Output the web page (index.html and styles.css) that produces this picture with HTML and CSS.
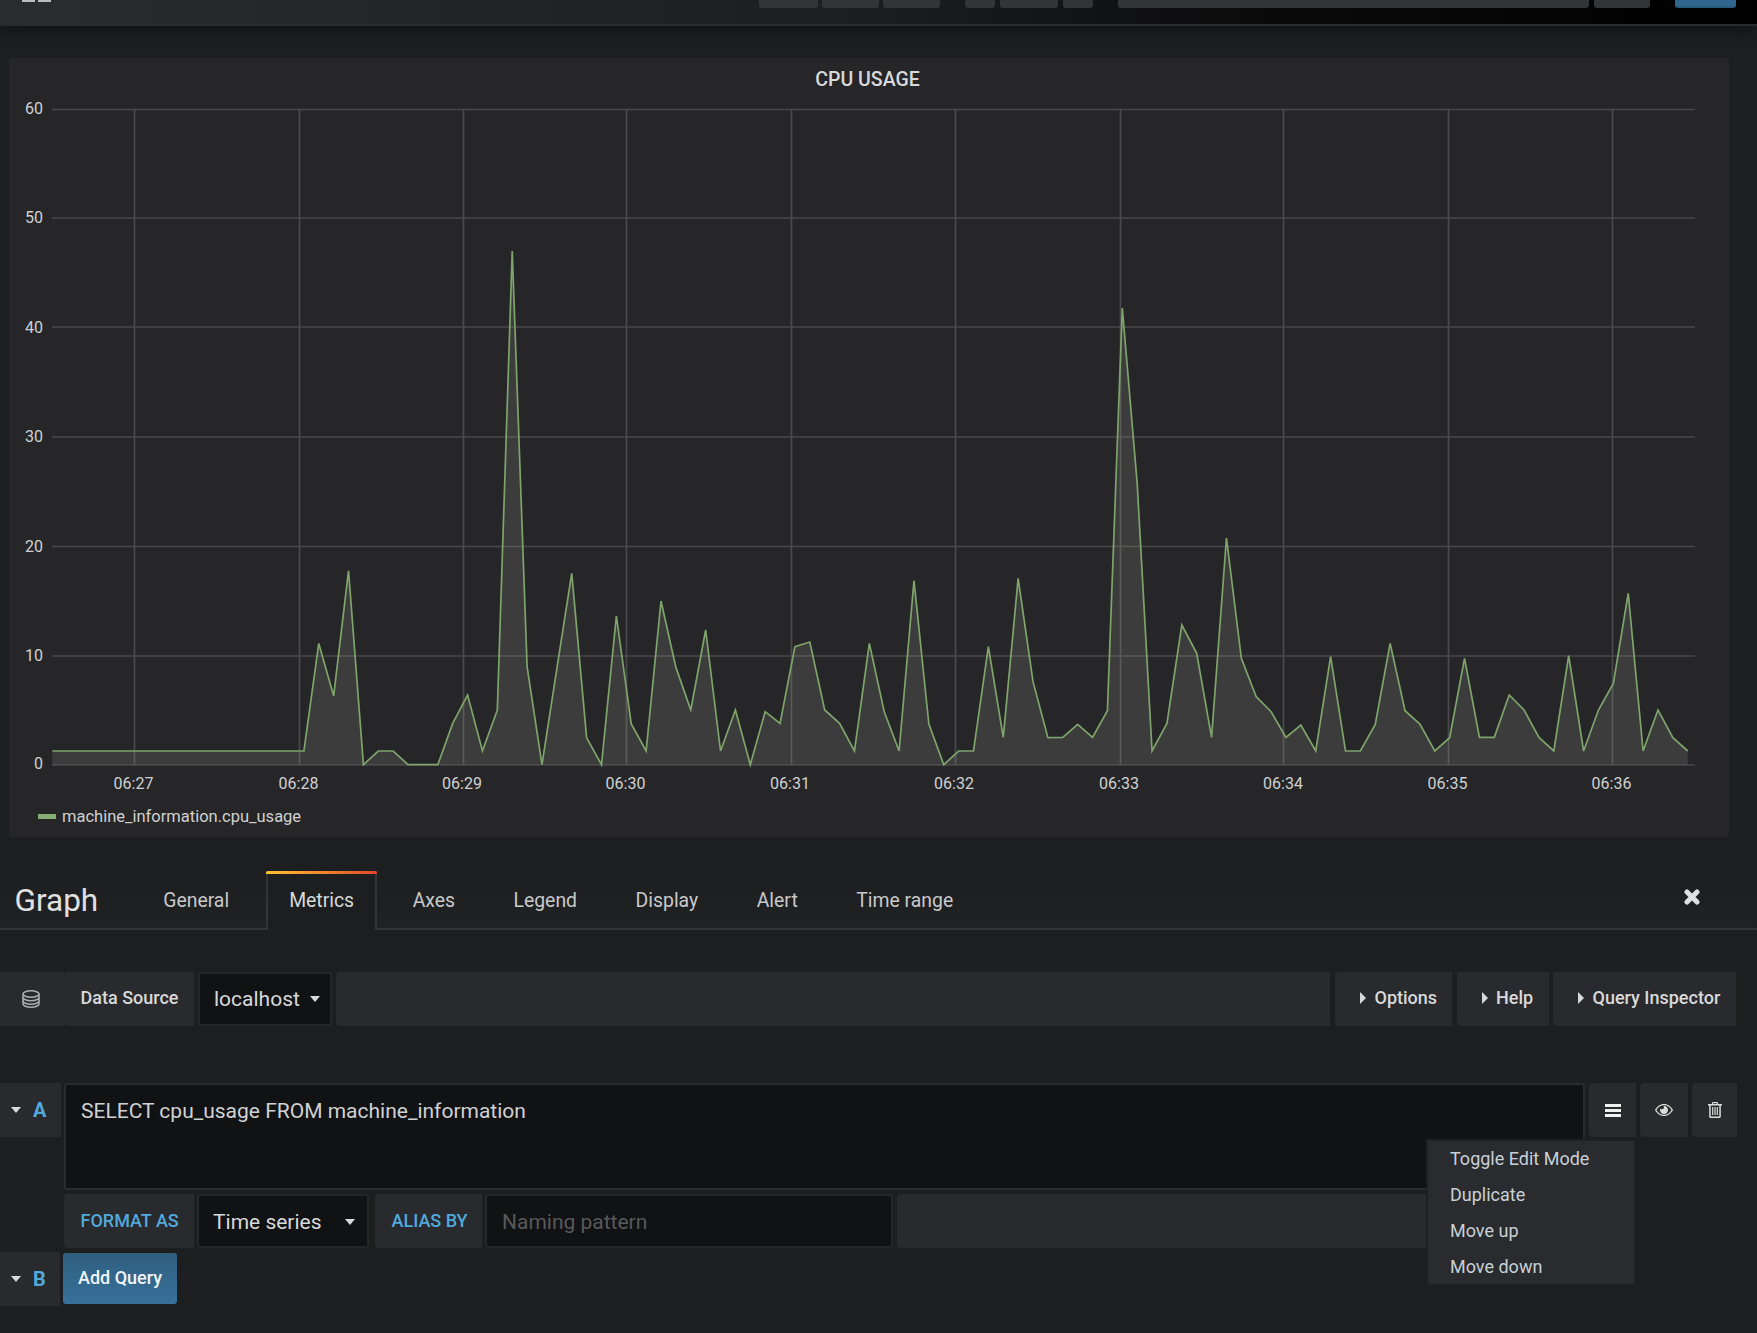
FILE: index.html
```html
<!DOCTYPE html>
<html lang="en">
<head>
<meta charset="utf-8">
<title>CPU USAGE - Graph</title>
<link rel="stylesheet" href="styles.css">
</head>
<body>
<header class="topbar">
  <div class="logo"><span></span><span></span></div>
  <div class="navgroup g1"><span class="nb w59"></span><span class="nb w57"></span><span class="nb w57"></span></div>
  <div class="navgroup g2"><span class="nb w30"></span><span class="nb w58"></span><span class="nb w30"></span></div>
  <div class="navgroup g3"><span class="nb w471"></span><span class="nb w56"></span></div>
  <div class="navgroup g4"><span class="nb nb-blue w61"></span></div>
</header>

<section class="panel">
  <h2 class="panel-title">CPU USAGE</h2>
  <svg class="chart" viewBox="9 100 1720 695" width="1720" height="695">
    <g class="grid">
      <path d="M52 109.5H1695M52 218H1695M52 327H1695M52 437H1695M52 546.5H1695M52 656H1695M52 765H1695"/>
      <path class="vgrid" d="M134.5 109V765M299.5 109V765M463.5 109V765M626.5 109V765M791.5 109V765M955.5 109V765M1120.5 109V765M1283.5 109V765M1448.5 109V765M1612.5 109V765"/>
    </g>
    <g transform="translate(303.9 764.7) scale(14.88 -1)">
      <polygon class="area" points="-16.9,0 -16.9,13.7 0,13.7 1,121.3 2,68.7 3,194 4,0 5,13.7 6,13.7 7,0 8,0 9,0 10,41.3 11,69.7 12,13.7 13,54.7 14,513.6 15,98 16,0 17,96 18,191.3 19,27 20,0 21,148.7 22,40.7 23,13.7 24,163.7 25,97.3 26,54.7 27,134.7 28,13.7 29,54.7 30,0 31,53 32,41.3 33,118 34,122.7 35,54.7 36,41.3 37,13.7 38,121.3 39,53 40,13.7 41,184 42,40.7 43,0 44,13.7 45,13.7 46,118 47,27.3 48,186.3 49,83 50,27 51,27.3 52,40.3 53,27.3 54,54 55,456.7 56,281.3 57,13.7 58,41.3 59,139.7 60,111.3 61,27.3 62,226.7 63,106.3 64,68 65,53 66,27.3 67,39.7 68,13.7 69,108 70,13.7 71,13.7 72,40.3 73,121.3 74,54 75,40.7 76,13.7 77,27 78,106.3 79,27.3 80,27.3 81,69.7 82,54.7 83,27.3 84,13.7 85,109 86,13.7 87,54.7 88,81.3 89,171.3 90,13.7 91,54.7 92,27 93,13.7 93,0"/>
      <polyline class="line" points="-16.9,13.7 0,13.7 1,121.3 2,68.7 3,194 4,0 5,13.7 6,13.7 7,0 8,0 9,0 10,41.3 11,69.7 12,13.7 13,54.7 14,513.6 15,98 16,0 17,96 18,191.3 19,27 20,0 21,148.7 22,40.7 23,13.7 24,163.7 25,97.3 26,54.7 27,134.7 28,13.7 29,54.7 30,0 31,53 32,41.3 33,118 34,122.7 35,54.7 36,41.3 37,13.7 38,121.3 39,53 40,13.7 41,184 42,40.7 43,0 44,13.7 45,13.7 46,118 47,27.3 48,186.3 49,83 50,27 51,27.3 52,40.3 53,27.3 54,54 55,456.7 56,281.3 57,13.7 58,41.3 59,139.7 60,111.3 61,27.3 62,226.7 63,106.3 64,68 65,53 66,27.3 67,39.7 68,13.7 69,108 70,13.7 71,13.7 72,40.3 73,121.3 74,54 75,40.7 76,13.7 77,27 78,106.3 79,27.3 80,27.3 81,69.7 82,54.7 83,27.3 84,13.7 85,109 86,13.7 87,54.7 88,81.3 89,171.3 90,13.7 91,54.7 92,27 93,13.7"/>
    </g>
    <g class="ylabels">
      <text x="43" y="114">60</text>
      <text x="43" y="223">50</text>
      <text x="43" y="332.500">40</text>
      <text x="43" y="442">30</text>
      <text x="43" y="551.500">20</text>
      <text x="43" y="660.500">10</text>
      <text x="43" y="769">0</text>
    </g>
    <g class="xlabels">
      <text x="133.5" y="789">06:27</text>
      <text x="298.5" y="789">06:28</text>
      <text x="462" y="789">06:29</text>
      <text x="625.5" y="789">06:30</text>
      <text x="790" y="789">06:31</text>
      <text x="954" y="789">06:32</text>
      <text x="1119" y="789">06:33</text>
      <text x="1283" y="789">06:34</text>
      <text x="1447.5" y="789">06:35</text>
      <text x="1611.5" y="789">06:36</text>
    </g>
  </svg>
  <div class="legend"><span class="swatch"></span><span>machine_information.cpu_usage</span></div>
</section>

<nav class="tabs">
  <h1 class="tabs-title">Graph</h1>
  <a class="tab">General</a>
  <a class="tab tab-active">Metrics</a>
  <a class="tab">Axes</a>
  <a class="tab">Legend</a>
  <a class="tab">Display</a>
  <a class="tab">Alert</a>
  <a class="tab">Time range</a>
  <svg class="close" viewBox="0 0 16 16" width="16" height="16"><path d="M3 3L13 13M13 3L3 13"/></svg>
</nav>

<div class="row ds-row">
  <div class="joined">
    <div class="seg seg-icon">
      <svg class="db-icon" viewBox="0 0 18 18" width="18" height="18">
        <ellipse cx="9" cy="4" rx="8" ry="3.200"/>
        <path d="M1 4V14C1 15.800 4.600 17.200 9 17.200S17 15.800 17 14V4"/>
        <path d="M1 7.500C1 9.300 4.600 10.700 9 10.700S17 9.300 17 7.500M1 11C1 12.800 4.600 14.200 9 14.200S17 12.800 17 11"/>
      </svg>
    </div>
    <div class="seg seg-label label-ds">Data Source</div>
  </div>
  <div class="select sel-ds">localhost<i class="caret-down"></i></div>
  <div class="seg filler"></div>
  <div class="seg seg-btn btn-options"><i class="caret-right"></i>Options</div>
  <div class="seg seg-btn btn-help"><i class="caret-right"></i>Help</div>
  <div class="seg seg-btn btn-qi"><i class="caret-right"></i>Query Inspector</div>
</div>

<section class="query">
  <div class="row q-a">
    <div class="refid ref-a"><i class="caret-down"></i><b>A</b></div>
    <div class="sql">SELECT cpu_usage FROM machine_information</div>
    <div class="seg action act-menu">
      <svg viewBox="0 0 16 13" width="16" height="13" class="ico-bars"><path d="M0 0H16V3H0ZM0 5H16V8H0ZM0 10H16V13H0Z"/></svg>
    </div>
    <div class="seg action act-eye">
      <svg viewBox="0 0 18 14" width="18" height="14" class="ico-eye"><path fill-rule="evenodd" d="M9 1C13 1 16.300 3.700 18 7C16.300 10.300 13 13 9 13S1.700 10.300 0 7C1.700 3.700 5 1 9 1ZM9 2.200C5.800 2.200 3 4 1.500 7C3 10 5.800 11.800 9 11.800S15 10 16.500 7C15 4 12.200 2.200 9 2.200Z"/><path d="M9 3C11.300 3 13 4.800 13 7S11.300 11 9 11S5 9.200 5 7C5 6.400 5.100 5.900 5.300 5.400C5.700 6 6.300 6.300 7 6.300C8.200 6.300 9 5.400 9 4.300C9 3.800 8.800 3.300 8.500 3Z"/></svg>
    </div>
    <div class="seg action act-trash">
      <svg viewBox="0 0 14 16" width="14" height="16" class="ico-trash"><path fill-rule="evenodd" d="M4.500 0H9.500L10.300 2H14V3.500H12.800V14.500C12.800 15.400 12.200 16 11.400 16H2.600C1.800 16 1.200 15.400 1.200 14.500V3.500H0V2H3.700ZM5.300 1.200L4.900 2H9.100L8.700 1.200ZM2.700 3.500V14.500H11.300V3.500ZM4.100 5H5.300V13H4.100ZM6.400 5H7.600V13H6.400ZM8.700 5H9.900V13H8.700Z"/></svg>
    </div>
  </div>
  <div class="row q-opts">
    <div class="seg seg-label seg-kw kw-format">FORMAT AS</div>
    <div class="select sel-format">Time series<i class="caret-down"></i></div>
    <div class="seg seg-label seg-kw kw-alias">ALIAS BY</div>
    <div class="input-alias">Naming pattern</div>
    <div class="seg filler"></div>
  </div>
  <div class="row q-b">
    <div class="refid ref-b"><i class="caret-down"></i><b>B</b></div>
    <button class="add-query">Add Query</button>
  </div>
  <ul class="menu">
    <li>Toggle Edit Mode</li>
    <li>Duplicate</li>
    <li>Move up</li>
    <li>Move down</li>
  </ul>
</section>
</body>
</html>
```

FILE: styles.css
```css
* { box-sizing: border-box; }
html, body { margin: 0; padding: 0; }
body {
  width: 1757px;
  height: 1333px;
  overflow: hidden;
  background: #1d1e20;
  color: #d8d9da;
  font-family: Roboto, "Liberation Sans", sans-serif;
  font-size: 16px;
}

/* top bar */
.topbar {
  position: relative;
  height: 26px;
  display: flex;
  align-items: flex-start;
  background: linear-gradient(90deg, #2a2c30 0%, #1c1d1f 50%, #0a0a0b 72%, #000 100%);
  border-bottom: 2px solid #2a2b2d;
  box-shadow: 0 4px 16px #111214;
}
.logo { display: flex; gap: 3px; margin-left: 22px; width: 737px; }
.logo span { width: 13px; height: 2px; background: #bbb; }
.navgroup { display: flex; gap: 4px; }
.g2 { margin-left: 25px; gap: 5px; }
.g3 { margin-left: 25px; gap: 5px; }
.g4 { margin-left: 25px; }
.nb { height: 8px; background: #333436; border-radius: 0 0 3px 3px; }
.nb-blue { background: #31678f; border-bottom: 2px solid #295a7c; }
.w30 { width: 30px; } .w56 { width: 56px; } .w57 { width: 57px; } .w58 { width: 58px; }
.w59 { width: 59px; } .w61 { width: 61px; } .w471 { width: 471px; }

/* panel */
.panel {
  margin: 32px 0 0 9px;
  width: 1720px;
  height: 779px;
  background: #262628;
  border-radius: 3px;
  display: flex;
  flex-direction: column;
}
.panel-title {
  margin: 0;
  height: 42px;
  line-height: 43px;
  text-align: center;
  font-size: 19.500px;
  font-weight: 500;
  color: #d8d9da;
  padding-right: 3px;
}
.chart { display: block; flex: none; }
.grid path { fill: none; stroke: #48484a; stroke-width: 1.700; }
.grid .vgrid { stroke: #4a4a4c; }
.area { fill: rgba(180, 185, 165, 0.15); }
.line {
  fill: none;
  stroke: #7ea46c;
  stroke-width: 1.700;
  vector-effect: non-scaling-stroke;
  stroke-linejoin: miter;
}
.ylabels text, .xlabels text { fill: #d0d1d2; font-size: 16px; font-family: Roboto, sans-serif; }
.ylabels text { text-anchor: end; }
.xlabels text { text-anchor: middle; }
.legend {
  display: flex;
  align-items: center;
  height: 42px;
  padding: 1px 0 0 29px;
  font-size: 16.500px;
  color: #d0d1d2;
}
.swatch { width: 18px; height: 5px; background: #85ad72; margin-right: 6px; }

/* tabs */
.tabs {
  margin-top: 34px;
  height: 59px;
  display: flex;
  align-items: stretch;
  border-bottom: 2px solid #333436;
  background: linear-gradient(#1d1e20, #202123);
  position: relative;
}
.tabs-title {
  margin: 0 42px 0 14.500px;
  font-size: 31.500px;
  font-weight: 400;
  line-height: 59px;
  color: #e0e0e1;
}
.tab {
  padding: 0 23px;
  margin-right: 12.500px;
  line-height: 60px;
  font-size: 19.400px;
  color: #c8c9ca;
  height: 59px;
}
.tab-active {
  border: solid #333436;
  border-width: 0 2px;
  background: #1d1e20;
  position: relative;
  padding: 0 21px;
  margin-left: 1.500px;
  color: #d8d9da;
}
.tab-active::before {
  content: "";
  position: absolute;
  left: -2px;
  right: -2px;
  top: 0;
  height: 3px;
  border-radius: 2px 2px 0 0;
  background: linear-gradient(90deg, #ffc12f, #f08030 55%, #e0482a);
}
.close { margin: 18px 57px 0 auto; }
.close path { fill: none; stroke: #e0e0e0; stroke-width: 5; stroke-linecap: round; }

/* rows */
.row { display: flex; align-items: stretch; }
.seg { background: #292a2d; height: 54px; display: flex; align-items: center; border-radius: 4px 0 0 4px; }
.ds-row { margin-top: 42px; gap: 4px; padding-right: 21px; height: 54px; }
.joined { display: flex; }
.seg-icon { width: 64px; justify-content: center; padding-right: 2px; border-radius: 0; }
.db-icon ellipse, .db-icon path { fill: none; stroke: #aeafb0; stroke-width: 1.500; }
.seg-label, .seg-btn { font-weight: 500; font-size: 18px; color: #d8d9da; padding-bottom: 3px; }
.label-ds { width: 130px; padding-left: 16.500px; }
.select {
  background: #111214;
  border: 2px solid #262628;
  border-radius: 3px;
  height: 54px;
  display: flex;
  align-items: center;
  font-size: 21px;
  color: #d8d9da;
}
.sel-ds { width: 134px; padding-left: 14px; }
.sel-ds .caret-down { margin-left: 10px; }
.filler { flex: 1; }
.btn-options { width: 117px; padding-left: 25px; margin-left: 1px; }
.btn-help { width: 92px; padding-left: 24.500px; margin-left: 1px; }
.btn-qi { width: 183px; padding-left: 25px; }
.caret-right {
  display: inline-block;
  width: 0; height: 0;
  border-left: 6px solid #d8d9da;
  border-top: 6px solid transparent;
  border-bottom: 6px solid transparent;
  margin-right: 8.500px;
}
.caret-down {
  display: inline-block;
  width: 0; height: 0;
  border-top: 6px solid #d8d9da;
  border-left: 5.500px solid transparent;
  border-right: 5.500px solid transparent;
}

/* query */
.query { margin-top: 57px; position: relative; }
.q-a { height: 107px; padding-right: 20px; }
.refid {
  width: 61px;
  height: 54px;
  background: #292a2d;
  display: flex;
  align-items: center;
  padding-left: 11px;
}
.refid b { color: #52a9dc; font-size: 20px; font-weight: 700; margin-left: 12px; }
.sql {
  margin-left: 3px;
  flex: 1;
  background: #111214;
  border: 2px solid #2a2b2d;
  border-radius: 3px;
  padding: 14px 15px;
  font-size: 21px;
  line-height: 24px;
  color: #d0d1d2;
}
.action { justify-content: center; }
.act-menu { width: 47px; margin-left: 4px; }
.act-eye { width: 48px; margin-left: 4px; }
.act-trash { width: 45px; margin-left: 4px; }
.ico-bars path { fill: #f0f0f0; }
.ico-eye path, .ico-trash path { fill: #dcdcdc; }
.q-opts { margin-top: 4px; padding: 0 172px 0 64px; gap: 3px; height: 54px; }
.q-opts .seg-label { padding-bottom: 2px; }
.seg-kw { color: #52a9dc; }
.kw-format { width: 130px; padding-left: 16.500px; }
.sel-format { width: 172px; padding: 1px 12px 0 14px; justify-content: space-between; }
.kw-alias { width: 107px; padding-left: 16.500px; margin-left: 3px; }
.input-alias {
  width: 408px;
  background: #111214;
  border: 2px solid #262628;
  border-radius: 3px;
  display: flex;
  align-items: center;
  padding: 1px 0 0 15px;
  font-size: 21px;
  color: #58595b;
}
.q-opts .filler { margin-left: 1px; }
.q-b { margin-top: 4px; height: 54px; }
.ref-b { width: 60px; }
.add-query {
  margin: 1px 0 2px 3px;
  width: 114px;
  height: 51px;
  border: 0;
  border-radius: 3px;
  background: linear-gradient(#2f5f7f, #38709a);
  color: #f0f4f7;
  font: 500 18px Roboto, sans-serif;
  padding: 0 0 2px;
}
.menu {
  position: absolute;
  left: 1426px;
  top: 56px;
  width: 210px;
  height: 147px;
  margin: 0;
  padding: 0;
  list-style: none;
  background: #2a2b2e;
  border: 2px solid #1f2022;
}
.menu li {
  height: 36px;
  line-height: 35px;
  padding-left: 22px;
  font-size: 18px;
  color: #c8d0d8;
}
```
